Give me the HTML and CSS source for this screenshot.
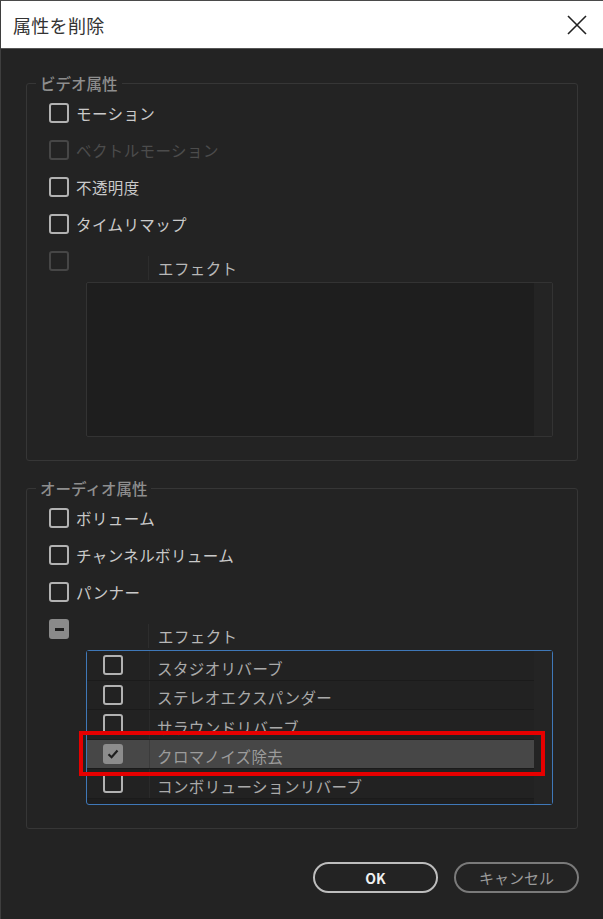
FILE: index.html
```html
<!DOCTYPE html>
<html lang="ja">
<head>
    <meta charset="UTF-8">
    <meta name="viewport" content="width=device-width, initial-scale=1.0">
    <title>属性を削除</title>
    <link rel="stylesheet" href="styles.css">
</head>
<body>
    <div class="dialog">
        <div class="titlebar">
            <span class="title">属性を削除</span>
            <svg class="close" width="20" height="20" viewBox="0 0 20 20">
                <path d="M1 1 L19 19 M19 1 L1 19" stroke="#222" stroke-width="1.6" fill="none"/>
            </svg>
        </div>

        <div class="content">
            <fieldset class="group">
                <legend>ビデオ属性</legend>
                <div class="opt"><span class="box"></span>モーション</div>
                <div class="opt disabled"><span class="box"></span>ベクトルモーション</div>
                <div class="opt"><span class="box"></span>不透明度</div>
                <div class="opt"><span class="box"></span>タイムリマップ</div>
                <div class="fx-head disabled">
                    <span class="box"></span>
                    <span class="fx-title">エフェクト</span>
                </div>
                <div class="fx-list">
                    <div class="rows"></div>
                    <div class="scroll"></div>
                </div>
            </fieldset>

            <fieldset class="group audio">
                <legend>オーディオ属性</legend>
                <div class="opt"><span class="box"></span>ボリューム</div>
                <div class="opt"><span class="box"></span>チャンネルボリューム</div>
                <div class="opt"><span class="box"></span>パンナー</div>
                <div class="fx-head">
                    <span class="box mixed"></span>
                    <span class="fx-title">エフェクト</span>
                </div>
                <div class="fx-list focused">
                    <div class="rows">
                        <div class="row"><span class="cell-box"><span class="box"></span></span><span class="name">スタジオリバーブ</span></div>
                        <div class="row"><span class="cell-box"><span class="box"></span></span><span class="name">ステレオエクスパンダー</span></div>
                        <div class="row"><span class="cell-box"><span class="box"></span></span><span class="name">サラウンドリバーブ</span></div>
                        <div class="row selected"><span class="cell-box"><span class="box checked">
                            <svg width="14" height="14" viewBox="0 0 14 14"><path d="M2.5 7.2 L5.6 10.2 L11.5 3.6" stroke="#1e1e1e" stroke-width="2.2" fill="none"/></svg>
                        </span></span><span class="name">クロマノイズ除去</span></div>
                        <div class="row"><span class="cell-box"><span class="box"></span></span><span class="name">コンボリューションリバーブ</span></div>
                    </div>
                    <div class="scroll"></div>
                    <div class="mark"></div>
                </div>
            </fieldset>
        </div>

        <div class="buttons">
            <button class="btn ok">OK</button>
            <button class="btn cancel">キャンセル</button>
        </div>
    </div>
</body>
</html>
```

FILE: styles.css
```css
* {
    margin: 0;
    padding: 0;
    box-sizing: border-box;
}
body {
    background: #232323;
    font-family: "Noto Sans CJK JP", "Noto Sans", sans-serif;
}
.dialog {
    width: 603px;
    height: 919px;
    background: #232323;
    border-top: 1px solid #4a4a4a;
    border-left: 1px solid #3e3e3e;
}

/* タイトルバー */
.titlebar {
    height: 48px;
    background: #fff;
    border-bottom: 1px solid #555;
    display: flex;
    align-items: center;
    justify-content: space-between;
    padding: 0 16px 0 12px;
}
.title {
    font-size: 18px;
    color: #333;
    letter-spacing: 0.3px;
}

.content {
    padding: 24px 25px 0 25px;
}

/* グループ */
.group {
    border: 1px solid #363636;
    border-radius: 3px;
    padding: 1px 23px 23px 22px;
}
.group legend {
    margin-left: -13px;
    padding: 0 4px;
    font-size: 15.5px;
    line-height: 20px;
    color: #8e8e8e;
    font-weight: 500;
}
.audio {
    margin-top: 17px;
}

.opt {
    height: 37px;
    display: flex;
    align-items: center;
    gap: 7px;
    font-size: 15.5px;
    color: #cacaca;
    letter-spacing: 0.4px;
}
.opt.disabled {
    color: #4c4c4c;
}

/* チェックボックス */
.box {
    width: 20px;
    height: 20px;
    border: 2px solid #b2b2b2;
    border-radius: 3px;
    display: inline-flex;
    align-items: center;
    justify-content: center;
    flex-shrink: 0;
}
.disabled .box {
    border-color: #464646;
}
.box.mixed {
    background: #8a8a8a;
    border-color: #8a8a8a;
}
.box.mixed::after {
    content: "";
    width: 9px;
    height: 3px;
    background: #1e1e1e;
}
.box.checked {
    background: #8c8c8c;
    border-color: #8c8c8c;
}

/* エフェクト */
.fx-head {
    height: 38px;
    display: flex;
    align-items: center;
}
.fx-title {
    align-self: stretch;
    margin: 14px 0 0 79px;
    border-left: 1px solid #2d2d2d;
    padding-left: 9px;
    display: flex;
    align-items: center;
    font-size: 15.5px;
    color: #b8b8b8;
    letter-spacing: 0.4px;
}
.fx-list {
    position: relative;
    margin: 2px 1px 0 37px;
    height: 155px;
    border: 1px solid #333;
    border-radius: 2px;
    background: #1e1e1e;
    display: flex;
}
.fx-list.focused {
    border-color: #3f78b8;
    border-radius: 3px;
}
.rows {
    flex: 1;
}
.scroll {
    width: 18px;
    background: #242424;
}
.row {
    height: 29.5px;
    display: flex;
    align-items: center;
    background: #222;
    border-bottom: 1.5px solid #1b1b1b;
    font-size: 15.5px;
    color: #aaa;
    letter-spacing: 0.4px;
}
.cell-box {
    width: 63px;
    align-self: stretch;
    display: flex;
    align-items: center;
    padding-left: 16px;
    border-right: 1px solid #2a2a2a;
}
.name {
    padding: 5px 0 0 7px;
}
.row.selected {
    background: #474747;
    color: #9c9c9c;
}
.row.selected .cell-box {
    border-right-color: #3c3c3c;
}

/* 赤枠 */
.mark {
    position: absolute;
    left: -8px;
    top: 80px;
    width: 466px;
    height: 45px;
    border: 4px solid #e60000;
}

/* ボタン */
.buttons {
    display: flex;
    justify-content: flex-end;
    gap: 16px;
    padding: 33px 24px 0 0;
}
.btn {
    width: 125px;
    height: 31px;
    border-radius: 16px;
    background: transparent;
    font-family: "Noto Sans CJK JP", "Noto Sans", sans-serif;
    font-size: 15px;
}
.btn.ok {
    border: 2px solid #bdbdbd;
    color: #f0f0f0;
    font-weight: 700;
    font-size: 14px;
}
.btn.cancel {
    border: 2px solid #7a7a7a;
    color: #9a9a9a;
}
```
